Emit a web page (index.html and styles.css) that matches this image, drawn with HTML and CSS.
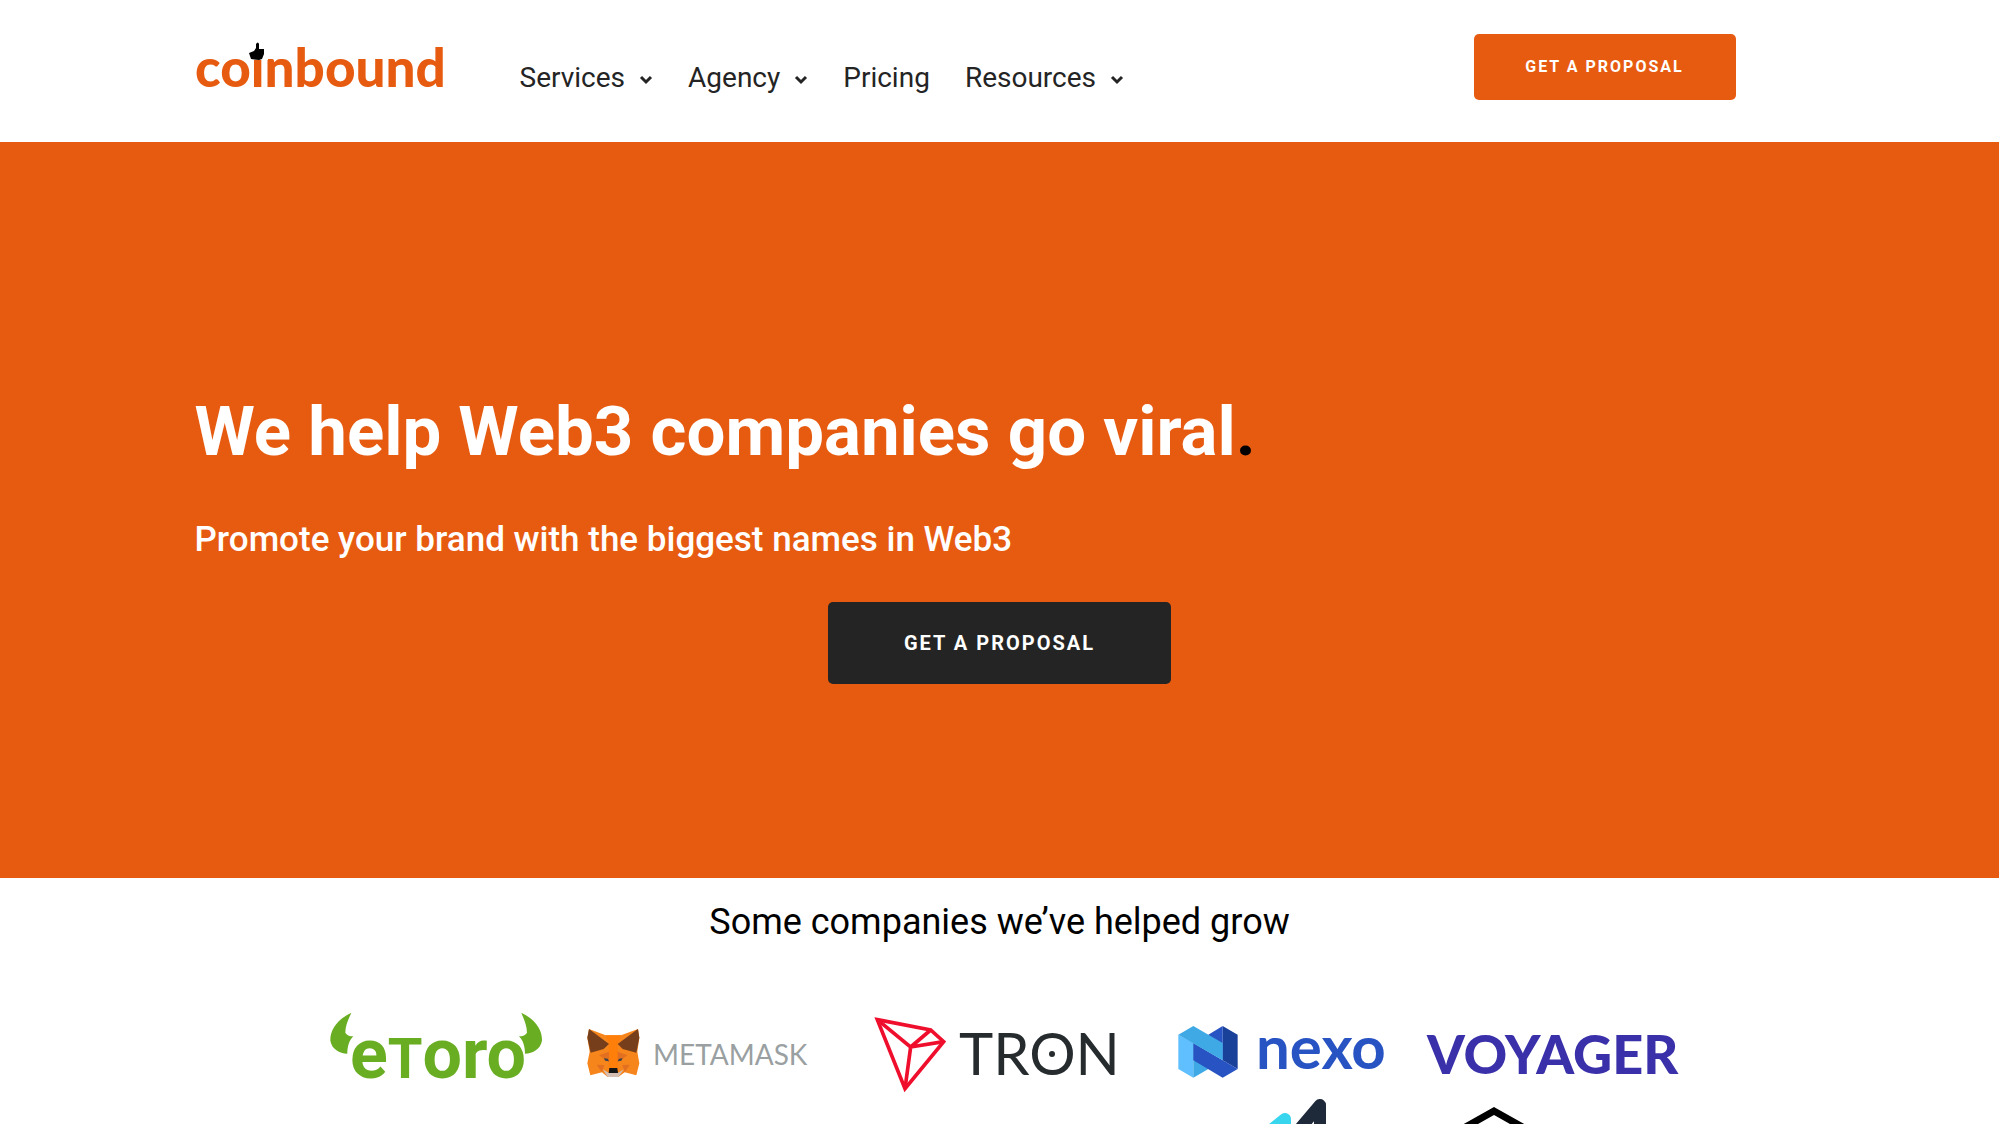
FILE: index.html
```html
<!DOCTYPE html>
<html lang="en">
<head>
	<meta charset="UTF-8">
	<meta name="viewport" content="width=device-width, initial-scale=1">
	<title>Coinbound</title>
	<link rel="stylesheet" href="styles.css">
</head>
<body>
	<header class="header">
		<div class="container header-inner">
			<a class="brand" href="#">
				<svg width="256" height="66" viewBox="0 0 256 66">
					<text class="brand-text" x="0" y="53">coinbound</text>
					<!-- thumb instead of the dot on the i -->
					<rect x="53" y="8" width="20" height="18" fill="#fff"/>
					<path d="M54 19 L59 17 L61 14 L61 10 Q63 7 64 10 L64 15 L69 15 L69 20 L67 25 L64 26 L56 25 Z"/>
				</svg>
			</a>
			<nav class="nav">
				<a href="#">Services <svg class="arrow" viewBox="0 0 14 10"><path d="M2 2l5 5 5-5"/></svg></a>
				<a href="#">Agency <svg class="arrow" viewBox="0 0 14 10"><path d="M2 2l5 5 5-5"/></svg></a>
				<a href="#">Pricing</a>
				<a href="#">Resources <svg class="arrow" viewBox="0 0 14 10"><path d="M2 2l5 5 5-5"/></svg></a>
			</nav>
			<a class="btn btn-orange" href="#">GET A PROPOSAL</a>
		</div>
	</header>

	<section class="hero">
		<div class="container">
			<h1>We help Web3 companies go viral<span class="dot">.</span></h1>
			<h2>Promote your brand with the biggest names in Web3</h2>
			<a class="btn btn-dark" href="#">GET A PROPOSAL</a>
		</div>
	</section>

	<section class="clients">
		<p class="clients-title">Some companies we’ve helped grow</p>
		<div class="logos">
			<svg class="logo" width="251" height="94" viewBox="-6 0 251 94">
				<g transform="scale(.3333)" fill="#69ae22">
					<path d="M94 38 C50 60 30 90 31 122 C36 148 58 160 82 161 C82 140 87 122 100 109 C88 109 80 105 76 98 C76 76 86 56 94 38Z"/>
					<path d="M604 38 C648 60 667 90 666 122 C661 148 639 160 615 161 C615 140 610 122 597 109 C609 109 617 105 621 98 C621 76 611 56 604 38Z"/>
				</g>
				<text class="etoro" x="30" y="78">e<tspan class="etoro-t">T</tspan>oro</text>
			</svg>

			<svg class="logo" width="278" height="94" viewBox="-5 0 278 94">
				<g transform="scale(.3333)">
					<path fill="#f6851b" d="M57 87 L107 106 L153 106 L204 87 L208 113 L202 155 L208 190 L199 226 L164 217 L145 231 L113 231 L96 217 L61 226 L52 190 L59 155 L52 113Z"/>
					<path fill="#ff7f0a" d="M107 106H153L143 132L145 206H116L117 132Z"/>
					<path fill="#763e1a" d="M57 87L117 132L101 147L62 158L52 113ZM204 87L143 132L158 147L199 158L208 113Z"/>
					<path fill="#e27020" d="M87 166L117 155L117 186ZM173 166L143 155L143 186ZM80 194L103 195L96 217ZM180 194L157 195L164 217Z"/>
					<path fill="#39414b" d="M101 175L113 176L117 184L106 182ZM158 175L147 176L143 184L154 182Z"/>
					<path fill="#d5bfb2" d="M98 208L116 218H144L162 208L145 231H113Z"/>
					<path fill="#161616" d="M118 204H142L144 219H116Z"/>
				</g>
				<text class="metamask" x="83" y="65">METAMASK</text>
			</svg>

			<svg class="logo" width="309" height="94" viewBox="-17 0 309 94">
				<g transform="scale(.3333)" fill="none" stroke="#ef0f2d" stroke-width="11">
					<path d="M52 59L212 90L251 125L135 266Z"/>
					<path d="M52 59L152 141L135 266M152 141L212 90M152 141L251 125"/>
				</g>
				<text class="tron" x="99" y="75">TRON</text>
				<circle cx="192" cy="54" r="3" fill="#262b2e"/>
			</svg>

			<svg class="logo" width="255" height="94" viewBox="-8 0 255 94">
				<g transform="scale(.3333)">
					<path fill="#5fbfff" d="M55 104L100 129V233L55 207Z"/>
					<path fill="#3fa9e5" d="M100 129L145 207L100 233Z"/>
					<path fill="#1a4199" d="M188 78L233 104V207L188 181Z"/>
					<path fill="#2853c3" d="M145 104L188 78V181Z"/>
					<path fill="#2853c3" d="M100 129L233 207L188 233L100 181Z"/>
					<path fill="#3fa9e5" d="M55 104L100 78L188 129V181Z"/>
				</g>
				<text class="nexo" x="96" y="69">nexo</text>
			</svg>

			<svg class="logo" width="278" height="94" viewBox="-3 0 278 94">
				<text class="voyager" x="17" y="74">VOYAGER</text>
			</svg>

			<svg class="logo second" width="255" height="80" viewBox="-8 94 255 80">
				<g fill="none" stroke-linecap="round" stroke-linejoin="round" stroke-width="12">
					<path stroke="#38d5ef" d="M95 143L125 119V160"/>
					<path stroke="#1e2a3a" d="M131 139L160 105V160"/>
				</g>
			</svg>

			<svg class="logo" width="278" height="80" viewBox="-3 94 278 80">
				<path fill="none" stroke="#000" stroke-width="7" d="M84 111L116 129V160L84 178L52 160V129Z"/>
			</svg>
		</div>
	</section>
</body>
</html>
```

FILE: styles.css
```css
*{box-sizing: border-box;}
body{margin: 0;height: 100vh;overflow: hidden;font-family: Roboto, "Liberation Sans", sans-serif;color: #000;background-color: #fff;}
a{text-decoration: none;color: inherit;}
.container{max-width: 1610px;margin: 0 auto;}

/* header */
.header{padding: 34px 0 42px;}
.header-inner{display: flex;align-items: flex-start;padding-right: 69px;}
.brand{display: block;height: 66px;margin-right: 69px;}
.brand svg{display: block;overflow: visible;}
.nav{display: flex;gap: 35px;margin: 28px auto 0 0;font-size: 28px;line-height: 32px;color: #242424;}
.nav a{display: flex;align-items: center;gap: 14px;}
.arrow{width: 14px;height: 10px;margin-top: 4px;fill: none;stroke: #242424;stroke-width: 3;}
.btn{display: block;border-radius: 5px;color: #fff;font-weight: 700;text-align: center;letter-spacing: 2px;}
.btn-orange{width: 262px;font-size: 16px;line-height: 66px;background-color: #e75b10;}
.btn-dark{width: 343px;margin: 0 auto;font-size: 20px;line-height: 82px;background-color: #242424;}

/* hero */
.hero{padding: 248px 0 194px;background-color: #e75b10;color: #fff;}
.hero h1{margin: 0;font-size: 69px;line-height: 84px;font-weight: 700;}
.hero h2{margin: 46px 0 42px;font-size: 35px;line-height: 40px;font-weight: 500;}
.dot{color: #000;}

/* clients */
.clients-title{margin: 0;padding: 22px 0 56px;font-size: 36px;line-height: 44px;text-align: center;}
.logos{display: grid;grid-template-columns: 251px 278px 309px 255px 278px;justify-content: center;}
.logo{display: block;}
.second{grid-column: 4;}

/* wordmarks */
.brand-text{font-family: Lato, sans-serif;font-weight: 900;font-size: 53px;fill: #e75b10;}
.etoro{font-family: Roboto, sans-serif;font-weight: 700;font-size: 70px;fill: #69ae22;}
.etoro-t{font-size: 56px;}
.metamask{font-family: Lato, sans-serif;font-size: 28px;fill: #9a9fa1;}
.tron{font-family: Lato, sans-serif;font-size: 58px;fill: #262b2e;}
.nexo{font-family: Lato, sans-serif;font-weight: 700;font-size: 60px;fill: #2853c3;}
.voyager{font-family: Lato, sans-serif;font-weight: 900;font-size: 54px;fill: #3a30aa;}
```
